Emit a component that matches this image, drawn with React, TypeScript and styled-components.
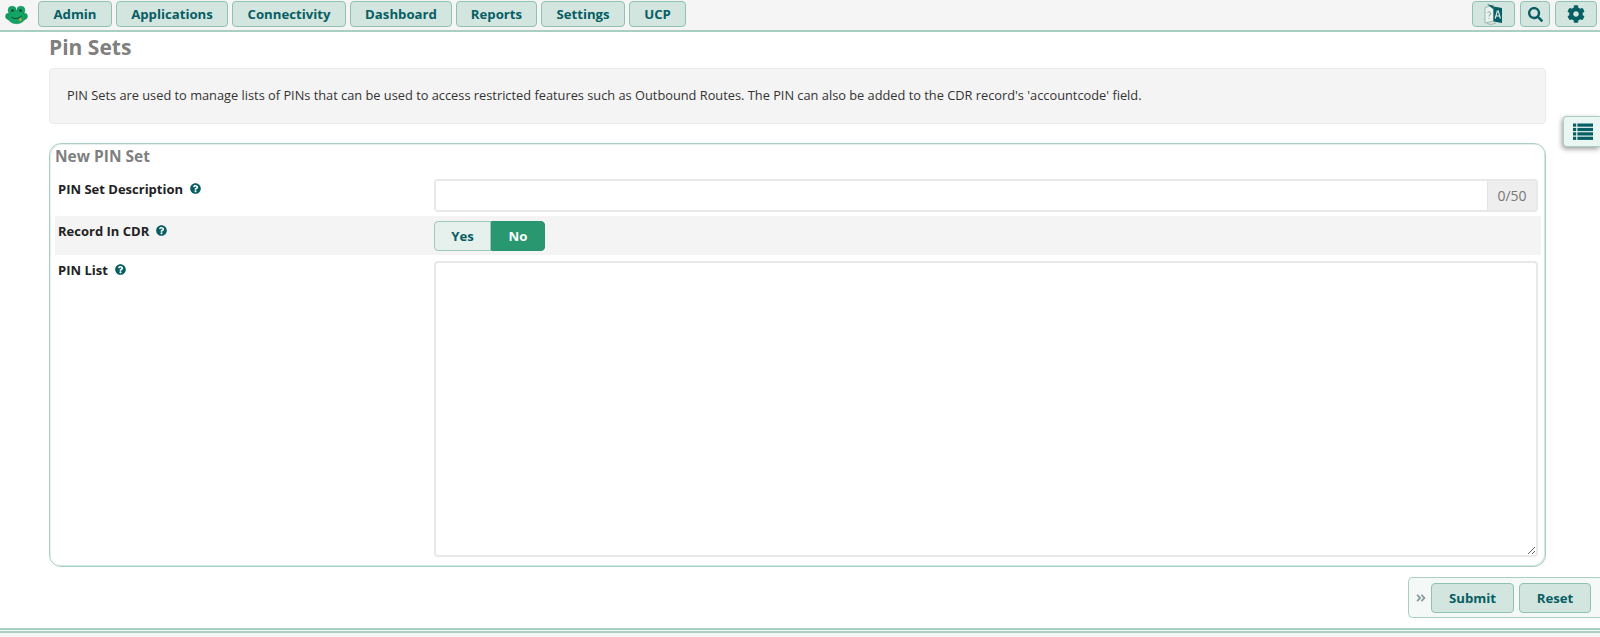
import React from "react";
import styled, { createGlobalStyle } from "styled-components";
import { FaCog, FaSearch, FaQuestionCircle, FaAngleDoubleRight } from "react-icons/fa";

const Global = createGlobalStyle`
  html, body { margin: 0; padding: 0; height: 100%; background: #fff; overflow: hidden; }
  body { font-family: "Open Sans", "Liberation Sans", sans-serif; color: #222; }
  * { box-sizing: border-box; }
`;

const Page = styled.div`
  display: flex;
  flex-direction: column;
  height: 637px;
  position: relative;
`;

const TopBar = styled.header`
  height: 32px;
  flex: none;
  display: flex;
  align-items: flex-start;
  padding: 1px 3px 0 4px;
  background: #f5f5f5;
  border-bottom: 2px solid #a9cfc4;
`;

const Logo = styled.div`
  width: 26px;
  height: 27px;
  margin-right: 8px;
  padding-left: 1px;
  display: flex;
  align-items: center;
`;

const NavGroup = styled.nav`
  display: flex;
  gap: 4px;
`;

const RightGroup = styled.div`
  display: flex;
  gap: 5px;
  margin-left: auto;
`;

const NavButton = styled.button<{ $w: number }>`
  width: ${(p) => p.$w}px;
  height: 26px;
  padding: 0;
  border: 1px solid #8fc2b2;
  border-radius: 4px;
  background: #d3e5df;
  color: #075e63;
  font: 700 13.2px "Open Sans", sans-serif;
  display: flex;
  align-items: center;
  justify-content: center;
`;

const Main = styled.main`
  flex: 1;
  display: flex;
  flex-direction: column;
  padding: 0 54px 0 49px;
`;

const Title = styled.h1`
  margin: 0;
  height: 36px;
  font-size: 21px;
  line-height: 31px;
  font-weight: 700;
  color: #7f7f7f;
`;

const Info = styled.div`
  height: 56px;
  padding: 0 18px 2px 17px;
  display: flex;
  align-items: center;
  background: #f4f4f4;
  border: 1px solid #ececec;
  border-radius: 4px;
  font-size: 12.8px;
  color: #333;
`;

const FormBox = styled.section`
  margin-top: 19px;
  height: 424px;
  padding: 2px 4px 8px 5px;
  border: 1px solid #a9cfc4;
  box-shadow: inset 1px 1px 0 #e3f0ec, inset -1px -1px 0 #d5e8e2;
  border-radius: 12px;
  display: flex;
  flex-direction: column;
`;

const FormTitle = styled.h2`
  margin: 0;
  height: 33px;
  font-size: 15.5px;
  line-height: 21px;
  font-weight: 700;
  color: #7f7f7f;
`;

const Row = styled.div<{ $shade?: boolean; $grow?: boolean }>`
  display: grid;
  grid-template-columns: 376px 1fr;
  padding: ${(p) => (p.$shade ? "5px 3px 4px 3px" : "0 3px 0 3px")};
  background: ${(p) => (p.$shade ? "#f4f4f4" : "transparent")};
  ${(p) => (p.$grow ? "flex: 1; min-height: 0;" : "")}
`;

const Label = styled.label`
  display: flex;
  align-items: center;
  align-self: start;
  height: 19px;
  gap: 7px;
  font-size: 13px;
  font-weight: 700;
  color: #222;
`;

const Help = styled(FaQuestionCircle)`
  width: 11px;
  height: 11px;
  color: #075e63;
`;

const InputGroup = styled.div`
  display: flex;
  height: 33px;
  margin-bottom: 4px;
  border: 2px solid #e8e8e8;
  border-radius: 4px;
`;

const TextInput = styled.input`
  flex: 1;
  border: none;
  outline: none;
  background: #fff;
  min-width: 0;
`;

const Counter = styled.span`
  width: 49px;
  display: flex;
  align-items: center;
  justify-content: center;
  background: #eeeeee;
  border-left: 1px solid #e4e4e4;
  color: #777;
  font-size: 14px;
`;

const Toggle = styled.div`
  display: flex;
  width: 111px;
  height: 30px;
`;

const ToggleButton = styled.button<{ $on?: boolean }>`
  flex: ${(p) => (p.$on ? "0 0 54px" : "1")};
  padding: 0;
  border: 1px solid ${(p) => (p.$on ? "#27936f" : "#9cc9ba")};
  border-radius: ${(p) => (p.$on ? "0 4px 4px 0" : "4px 0 0 4px")};
  background: ${(p) => (p.$on ? "#29976f" : "#e6f0ec")};
  color: ${(p) => (p.$on ? "#fff" : "#075e63")};
  font: 700 13.2px "Open Sans", sans-serif;
`;

const TextArea = styled.textarea`
  display: block;
  width: 100%;
  height: 296px;
  margin-top: 6px;
  border: 2px solid #e8e8e8;
  border-radius: 4px;
  outline: none;
  background: #fff;
`;

const ListLabel = styled(Label)`
  margin-top: 5px;
`;

const ActionBar = styled.div`
  align-self: flex-end;
  margin: 10px -54px 0 0;
  width: 192px;
  height: 41px;
  padding: 0 9px 0 7px;
  display: flex;
  align-items: center;
  background: #f4f8f6;
  border: 1px solid #a9cfc4;
  border-right: none;
  border-radius: 5px 0 0 5px;
`;

const Chevrons = styled(FaAngleDoubleRight)`
  width: 10px;
  height: 12px;
  color: #8a9f9e;
  margin-right: 5px;
`;

const ActionButton = styled(NavButton)`
  height: 30px;
  margin-left: 5px;
  &:first-of-type { margin-left: 0; }
`;

const Footer = styled.footer`
  flex: none;
  margin-top: 10px;
  height: 9px;
  background: #f5f5f5;
  border-top: 5px double #a9cfc4;
`;

const SideTab = styled.button`
  position: absolute;
  right: 0;
  top: 116px;
  width: 37px;
  height: 31px;
  padding: 0 0 0 2px;
  display: flex;
  align-items: center;
  justify-content: center;
  background: #e9f6f2;
  border: 1px solid #a9cfc4;
  border-right: none;
  border-radius: 4px 0 0 4px;
  box-shadow: -1px 2px 5px rgba(0, 0, 0, 0.4);
  color: #075e63;
`;

const Frog = () => (
  <svg width="23" height="20" viewBox="0 0 26 23">
    <g fill="#12a565" stroke="#0d7d50" strokeWidth="0.6">
      <circle cx="8" cy="6" r="4.6" />
      <circle cx="18" cy="6" r="4.6" />
      <circle cx="4" cy="13" r="3.6" />
      <circle cx="22" cy="13" r="3.6" />
      <ellipse cx="13" cy="14" rx="10" ry="7.5" />
    </g>
    <ellipse cx="13" cy="13" rx="9" ry="6.5" fill="#12a565" />
    <circle cx="8.4" cy="6.4" r="1.5" fill="#0c3d2e" />
    <circle cx="17.6" cy="6.4" r="1.5" fill="#0c3d2e" />
    <path d="M7 14q6 4 12-1.5" fill="none" stroke="#0c3d2e" strokeWidth="1.1" />
    <path d="M15.5 16l2.5-1.6 1 3-2.2 1.6z" fill="#c9a13a" />
  </svg>
);

const Translate = () => (
  <svg width="20" height="23" viewBox="0 0 20 23">
    <path d="M1 4.5l8.5-2.5v16l-8.5 2z" fill="#eaf2ef" stroke="#93aaa5" strokeWidth="0.8" />
    <path d="M9.5 3.5l8.5 1.5v15l-8.5-1.5z" fill="#075e63" />
    <path d="M3 1l6.5 2v3.5z" fill="#075e63" />
    <path d="M11.2 15.5l2.1-7.5h1l2.1 7.5M12 13h3.8" fill="none" stroke="#eaf2ef" strokeWidth="1.1" />
    <path d="M3.5 9.5q1.5-1.6 3 0t-1.5 3v1M5 15v1" fill="none" stroke="#7f9c96" strokeWidth="0.9" />
    <path d="M3 20.5q4 2.2 9-.5" fill="none" stroke="#93aaa5" strokeWidth="0.8" />
  </svg>
);

const ListIcon = () => (
  <svg width="20" height="17" viewBox="0 0 20 17" fill="currentColor">
    <rect x="0" y="0.5" width="3.2" height="3.2" />
    <rect x="4.4" y="0.5" width="15.6" height="3.2" />
    <rect x="0" y="4.9" width="3.2" height="3.2" />
    <rect x="4.4" y="4.9" width="15.6" height="3.2" />
    <rect x="0" y="9.3" width="3.2" height="3.2" />
    <rect x="4.4" y="9.3" width="15.6" height="3.2" />
    <rect x="0" y="13.7" width="3.2" height="3.2" />
    <rect x="4.4" y="13.7" width="15.6" height="3.2" />
  </svg>
);

const navItems: [string, number][] = [
  ["Admin", 74], ["Applications", 112], ["Connectivity", 114], ["Dashboard", 102],
  ["Reports", 81], ["Settings", 84], ["UCP", 57],
];

export default function App() {
  return (
    <Page>
      <Global />
      <TopBar>
        <Logo><Frog /></Logo>
        <NavGroup>
          {navItems.map(([t, w]) => <NavButton key={t} $w={w}>{t}</NavButton>)}
        </NavGroup>
        <RightGroup>
          <NavButton $w={43}><Translate /></NavButton>
          <NavButton $w={30}><FaSearch size={15} /></NavButton>
          <NavButton $w={42}><FaCog size={18} /></NavButton>
        </RightGroup>
      </TopBar>
      <Main>
        <Title>Pin Sets</Title>
        <Info>PIN Sets are used to manage lists of PINs that can be used to access restricted features such as Outbound Routes. The PIN can also be added to the CDR record's 'accountcode' field.</Info>
        <FormBox>
          <FormTitle>New PIN Set</FormTitle>
          <Row>
            <Label>PIN Set Description <Help /></Label>
            <InputGroup>
              <TextInput />
              <Counter>0/50</Counter>
            </InputGroup>
          </Row>
          <Row $shade>
            <Label>Record In CDR <Help /></Label>
            <Toggle>
              <ToggleButton>Yes</ToggleButton>
              <ToggleButton $on>No</ToggleButton>
            </Toggle>
          </Row>
          <Row $grow>
            <ListLabel>PIN List <Help /></ListLabel>
            <TextArea />
          </Row>
        </FormBox>
        <ActionBar>
          <Chevrons />
          <ActionButton $w={83}>Submit</ActionButton>
          <ActionButton $w={72}>Reset</ActionButton>
        </ActionBar>
      </Main>
      <Footer />
      <SideTab><ListIcon /></SideTab>
    </Page>
  );
}
